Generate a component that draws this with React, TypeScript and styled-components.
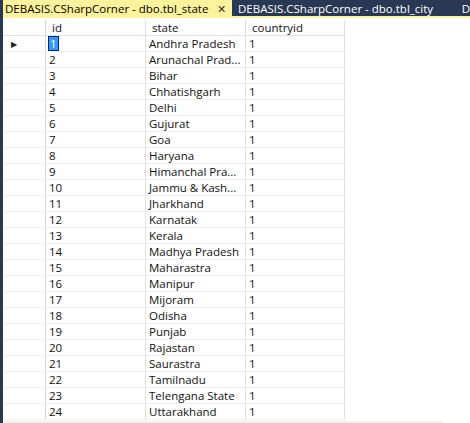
import React from "react";
import styled, { createGlobalStyle } from "styled-components";

const Global = createGlobalStyle`
  html, body { margin: 0; padding: 0; background: #ffffff; }
  body { font-family: "Open Sans", "Noto Sans", sans-serif; overflow: hidden; }
`;

const Window = styled.div`
  width: 470px;
  height: 423px;
  display: flex;
  flex-direction: column;
  border-left: 3px solid #293955;
  box-sizing: border-box;
  overflow: hidden;
  background: #fff;
`;

const TabBar = styled.div`
  display: flex;
  height: 16px;
  flex: none;
  background: #293955;
`;

const Tab = styled.div<{ $active?: boolean }>`
  display: flex;
  align-items: center;
  height: 16px;
  box-sizing: border-box;
  width: ${(p) => (p.$active ? "229px" : "auto")};
  flex: ${(p) => (p.$active ? "none" : "1")};
  background: ${(p) => (p.$active ? "#fff29d" : "#293955")};
  color: ${(p) => (p.$active ? "#000" : "#fff")};
  font-size: 11.5px;
  white-space: nowrap;
  overflow: hidden;
  padding-left: ${(p) => (p.$active ? "2px" : "6px")};
`;

const TabLabel = styled.span`
  flex: none;
`;

const Close = styled.span`
  margin-left: 9px;
  font-size: 11px;
  color: #333;
`;

const Spacer = styled.span`
  flex: 1;
`;

const Accent = styled.div`
  height: 2px;
  background: #fff29d;
  flex: none;
`;

const Grid = styled.div`
  display: flex;
  flex-direction: column;
  padding-top: 2px;
  font-size: 11.5px;
  color: #111;
`;

const Row = styled.div<{ $header?: boolean }>`
  display: grid;
  grid-template-columns: 43px 100px 100px 99px;
  height: 16px;
  border-bottom: 1px solid ${(p) => (p.$header ? "#e2e2e2" : "#efefef")};
  box-sizing: border-box;
  width: 342px;
`;

const Cell = styled.div<{ $header?: boolean }>`
  display: flex;
  align-items: center;
  padding-left: ${(p) => (p.$header ? "6px" : "3px")};
  border-right: 1px solid #e0e0e0;
  white-space: nowrap;
  overflow: hidden;
  line-height: 15px;
`;

const RowHead = styled.div`
  display: flex;
  align-items: center;
  padding-left: 8px;
  border-right: 1px solid #d4d4d4;
  font-size: 8px;
  color: #222;
`;

const Selected = styled.span`
  background: #3399ff;
  color: #fff;
  padding: 0 1px;
  line-height: 13px;
  outline: 1px solid #0a246a;
`;

const Scroll = styled.div`
  margin-top: 1px;
  height: 4px;
  width: 440px;
  background: #f0f0f0;
`;

const rows: [number, string][] = [
  [1, "Andhra Pradesh"],
  [2, "Arunachal Prad..."],
  [3, "Bihar"],
  [4, "Chhatishgarh"],
  [5, "Delhi"],
  [6, "Gujurat"],
  [7, "Goa"],
  [8, "Haryana"],
  [9, "Himanchal Pra..."],
  [10, "Jammu & Kash..."],
  [11, "Jharkhand"],
  [12, "Karnatak"],
  [13, "Kerala"],
  [14, "Madhya Pradesh"],
  [15, "Maharastra"],
  [16, "Manipur"],
  [17, "Mijoram"],
  [18, "Odisha"],
  [19, "Punjab"],
  [20, "Rajastan"],
  [21, "Saurastra"],
  [22, "Tamilnadu"],
  [23, "Telengana State"],
  [24, "Uttarakhand"],
];

export default function App() {
  return (
    <>
      <Global />
      <Window>
        <TabBar>
          <Tab $active>
            <TabLabel>DEBASIS.CSharpCorner - dbo.tbl_state</TabLabel>
            <Close>✕</Close>
          </Tab>
          <Tab>
            <TabLabel>DEBASIS.CSharpCorner - dbo.tbl_city</TabLabel>
            <Spacer />
            <TabLabel>D</TabLabel>
          </Tab>
        </TabBar>
        <Accent />
        <Grid>
          <Row $header>
            <RowHead />
            <Cell $header>id</Cell>
            <Cell $header>state</Cell>
            <Cell $header>countryid</Cell>
          </Row>
          {rows.map(([id, state]) => (
            <Row key={id}>
              <RowHead>{id === 1 ? "▶" : ""}</RowHead>
              <Cell>{id === 1 ? <Selected>{id}</Selected> : id}</Cell>
              <Cell>{state}</Cell>
              <Cell>1</Cell>
            </Row>
          ))}
          <Scroll />
        </Grid>
      </Window>
    </>
  );
}
